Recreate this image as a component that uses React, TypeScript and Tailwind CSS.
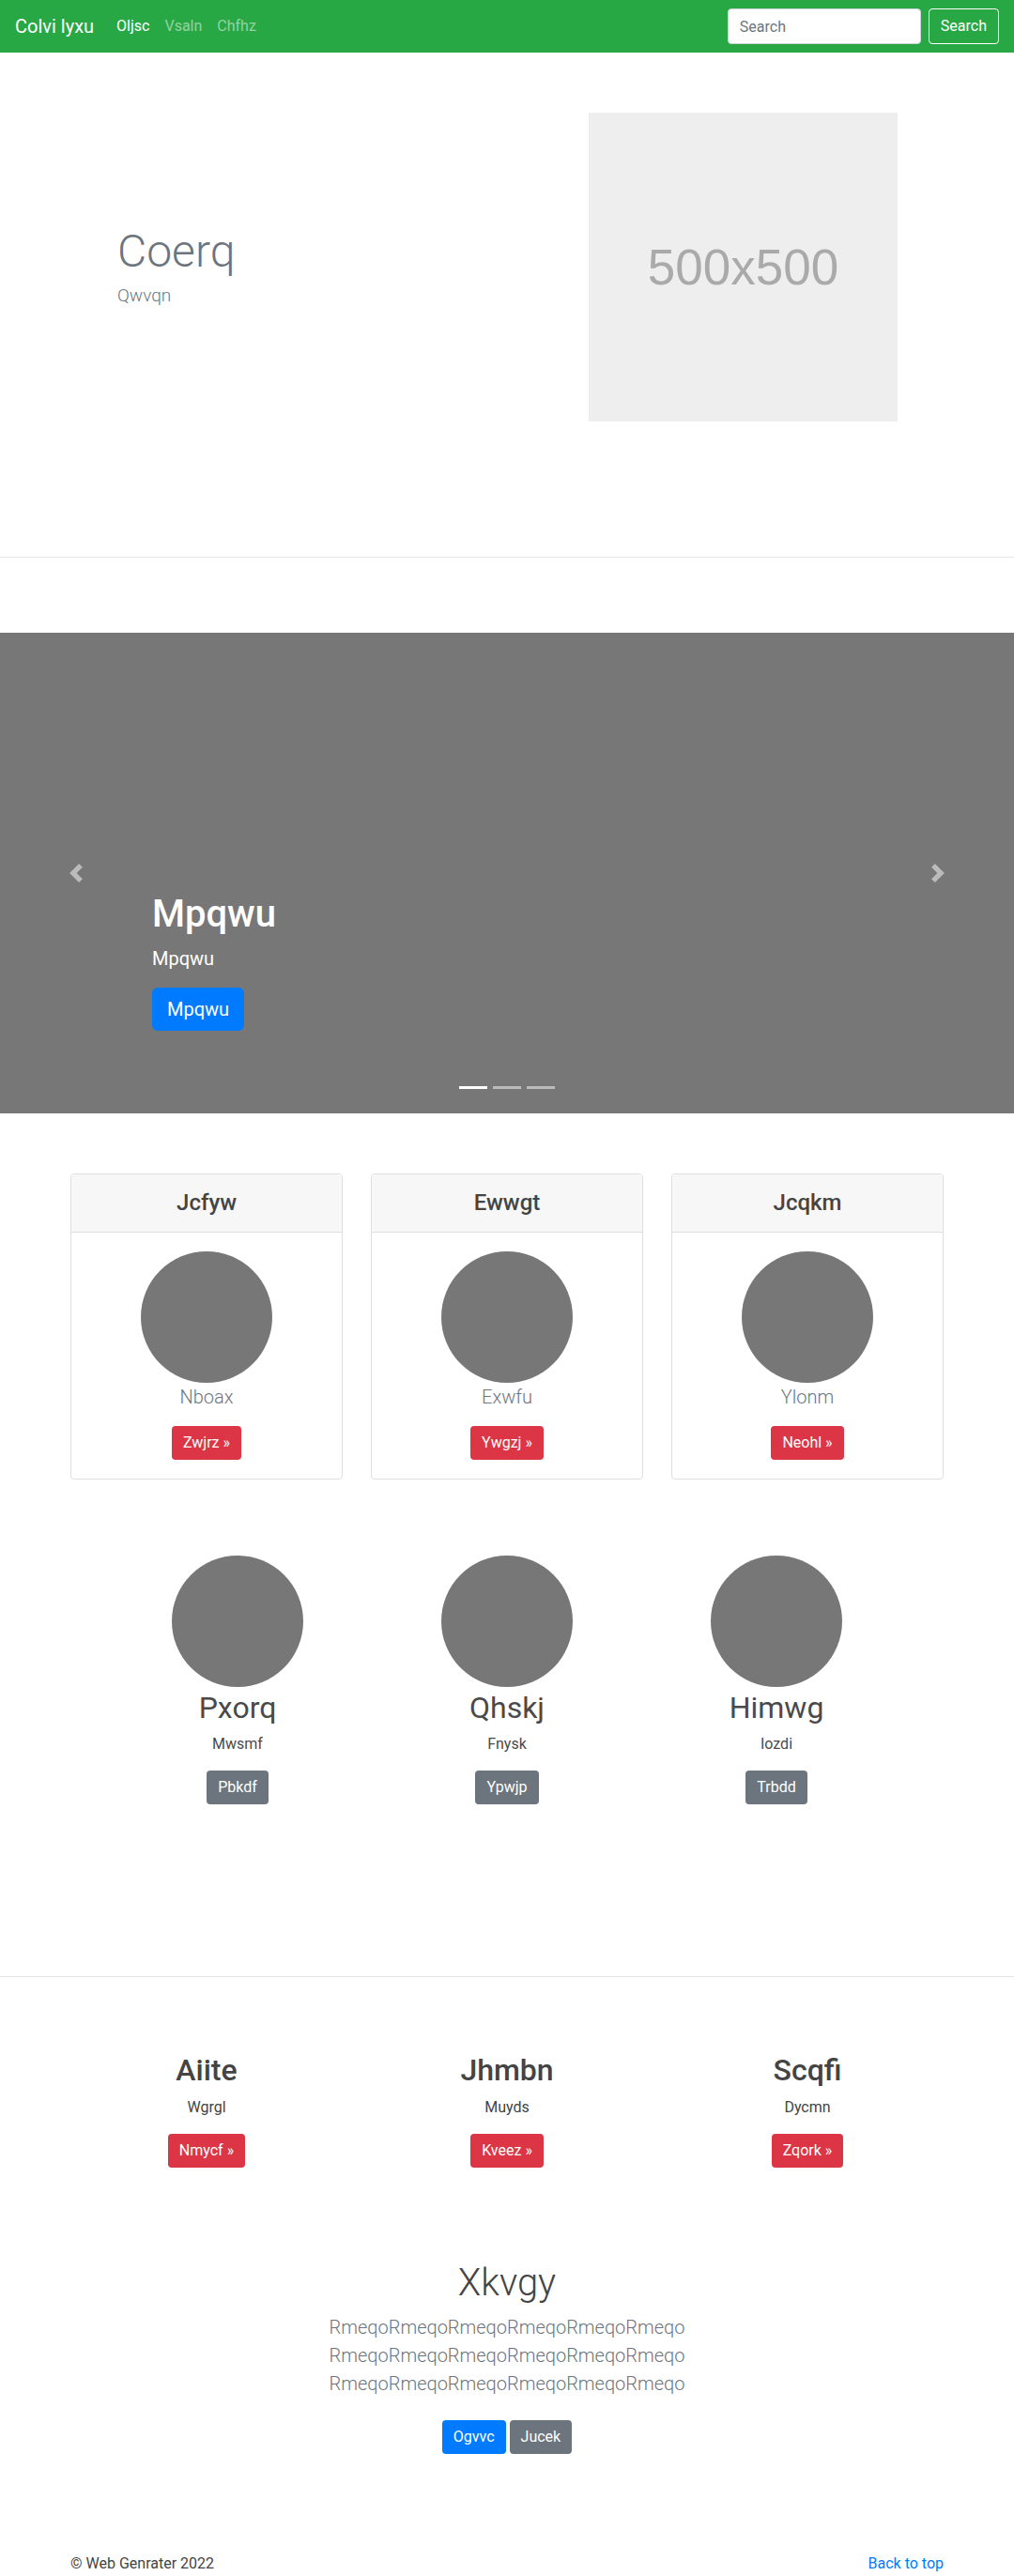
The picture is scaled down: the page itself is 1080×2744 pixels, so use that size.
import React from "react";

const featureCards = [
  { title: "Jcfyw", name: "Nboax", action: "Zwjrz" },
  { title: "Ewwgt", name: "Exwfu", action: "Ywgzj" },
  { title: "Jcqkm", name: "Ylonm", action: "Neohl" },
];

const people = [
  { title: "Pxorq", text: "Mwsmf", action: "Pbkdf" },
  { title: "Qhskj", text: "Fnysk", action: "Ypwjp" },
  { title: "Himwg", text: "Iozdi", action: "Trbdd" },
];

const columns = [
  { title: "Aiite", text: "Wgrgl", action: "Nmycf" },
  { title: "Jhmbn", text: "Muyds", action: "Kveez" },
  { title: "Scqfi", text: "Dycmn", action: "Zqork" },
];

function Navbar() {
  return (
    <nav className="flex h-14 items-center bg-[#28a745] px-4">
      <a href="#" className="mr-4 text-xl leading-[30px] text-white">
        Colvi lyxu
      </a>
      <ul className="flex items-center">
        <li>
          <a href="#" className="block px-2 py-2 text-white">
            Oljsc
          </a>
        </li>
        <li>
          <a href="#" className="block px-2 py-2 text-white/50">
            Vsaln
          </a>
        </li>
        <li>
          <a href="#" className="block px-2 py-2 text-white/50">
            Chfhz
          </a>
        </li>
      </ul>
      <form className="ml-auto flex items-center" onSubmit={(e) => e.preventDefault()}>
        <input
          type="text"
          placeholder="Search"
          className="mr-2 h-[38px] w-[206px] rounded border border-[#ced4da] bg-white px-3 text-base text-[#495057] placeholder:text-[#6c757d] outline-none"
        />
        <button
          type="submit"
          className="h-[38px] rounded border border-white px-3 text-base text-white"
        >
          Search
        </button>
      </form>
    </nav>
  );
}

function Hero() {
  return (
    <section className="pt-16 pb-[144px]">
      <div className="mx-auto flex w-[960px] items-center">
        <div className="w-[480px] pl-[65px]">
          <h1 className="text-[48px] font-light leading-[1.2] text-[#6c757d]">Coerq</h1>
          <p className="mt-1 text-[19px] font-light leading-[1.5] text-[#6c757d]">Qwvqn</p>
        </div>
        <div className="ml-[87px] flex h-[329px] w-[329px] items-center justify-center bg-[#eeeeee]">
          <span className="font-['Liberation_Sans',Arial,sans-serif] text-[53px] text-[#aaaaaa]">
            500x500
          </span>
        </div>
      </div>
    </section>
  );
}

function Carousel() {
  return (
    <div className="relative mt-20 flex h-[512px] flex-col justify-end bg-[#777777] pb-[88px] pl-[15%]">
      <h1 className="text-[40px] font-medium leading-[1.2] text-white">Mpqwu</h1>
      <p className="mt-2 text-xl leading-[1.5] text-white">Mpqwu</p>
      <div className="mt-4">
        <a
          href="#"
          className="inline-block rounded-md bg-[#007bff] px-4 py-2 text-xl leading-[1.5] text-white"
        >
          Mpqwu
        </a>
      </div>

      {/* controls */}
      <button className="absolute left-0 top-0 flex h-full w-[15%] items-center justify-center opacity-50">
        <svg width="20" height="20" viewBox="0 0 8 8" fill="#fff">
          <path d="M5.25 0l-4 4 4 4 1.5-1.5L4.25 4l2.5-2.5L5.25 0z" />
        </svg>
      </button>
      <button className="absolute right-0 top-0 flex h-full w-[15%] items-center justify-center opacity-50">
        <svg width="20" height="20" viewBox="0 0 8 8" fill="#fff">
          <path d="M2.75 0l-1.5 1.5L3.75 4l-2.5 2.5L2.75 8l4-4-4-4z" />
        </svg>
      </button>

      {/* indicators */}
      <ol className="absolute bottom-[26px] left-0 right-0 flex justify-center">
        <li className="mx-[3px] h-[3px] w-[30px] bg-white" />
        <li className="mx-[3px] h-[3px] w-[30px] bg-white/50" />
        <li className="mx-[3px] h-[3px] w-[30px] bg-white/50" />
      </ol>
    </div>
  );
}

function Circle() {
  return <div className="mx-auto h-[140px] w-[140px] rounded-full bg-[#777777]" />;
}

function FeatureCards() {
  return (
    <div className="mx-auto mt-16 grid w-[960px] grid-cols-3">
      {featureCards.map((card) => (
        <div key={card.title} className="px-[15px]">
          <div className="overflow-hidden rounded border border-[#dfdfdf] text-center">
            <div className="flex h-[62px] items-center justify-center border-b border-[#dfdfdf] bg-[#f7f7f7]">
              <h4 className="text-2xl font-medium leading-[1.2] text-[#444]">{card.title}</h4>
            </div>
            <div className="p-5">
              <Circle />
              <p className="text-xl font-light leading-[1.5] text-[#6c757d]">{card.name}</p>
              <a
                href="#"
                className="mt-4 inline-block rounded bg-[#dc3545] px-3 py-[6px] text-base leading-[1.5] text-white"
              >
                {card.action} &raquo;
              </a>
            </div>
          </div>
        </div>
      ))}
    </div>
  );
}

function People() {
  return (
    <div className="mx-auto mt-[81px] grid w-[861px] grid-cols-3 text-center">
      {people.map((p) => (
        <div key={p.title}>
          <Circle />
          <h2 className="mt-[3px] text-[32px] leading-[1.2] text-[#4a4a4a]">{p.title}</h2>
          <p className="mt-2 text-base leading-[1.5] text-[#4a4a4a]">{p.text}</p>
          <a
            href="#"
            className="mt-4 inline-block rounded bg-[#6c757d] px-3 py-[6px] text-base leading-[1.5] text-white"
          >
            {p.action}
          </a>
        </div>
      ))}
    </div>
  );
}

function Columns() {
  return (
    <div className="mx-auto mt-20 grid w-[960px] grid-cols-3 text-center">
      {columns.map((c) => (
        <div key={c.title}>
          <h2 className="text-[32px] font-medium leading-[1.2] text-[#444]">{c.title}</h2>
          <p className="mt-2 text-base leading-[1.5] text-[#444]">{c.text}</p>
          <a
            href="#"
            className="mt-4 inline-block rounded bg-[#dc3545] px-3 py-[6px] text-base leading-[1.5] text-white"
          >
            {c.action} &raquo;
          </a>
        </div>
      ))}
    </div>
  );
}

function CallToAction() {
  const line = "Rmeqo".repeat(6);
  return (
    <section className="mt-[99px] text-center">
      <h1 className="text-[40px] font-light leading-[1.2] text-[#444]">Xkvgy</h1>
      <p className="mt-2 text-xl font-light leading-[1.5] text-[#6c757d]">
        <span className="block">{line}</span>
        <span className="block">{line}</span>
        <span className="block">{line}</span>
      </p>
      <p className="mt-6 flex justify-center gap-1">
        <a href="#" className="rounded bg-[#007bff] px-3 py-[6px] text-base leading-[1.5] text-white">
          Ogvvc
        </a>
        <a href="#" className="rounded bg-[#6c757d] px-3 py-[6px] text-base leading-[1.5] text-white">
          Jucek
        </a>
      </p>
    </section>
  );
}

function Footer() {
  return (
    <footer className="mx-auto mt-[105px] flex w-[960px] justify-between px-[15px] pb-12 text-base leading-[1.5]">
      <p className="text-[#444]">&copy; Web Genrater 2022</p>
      <a href="#" className="text-[#007bff]">
        Back to top
      </a>
    </footer>
  );
}

export default function App() {
  return (
    <div className="min-h-screen bg-white font-[Roboto,sans-serif] text-[#212529]">
      <Navbar />
      <Hero />
      <div className="h-px bg-[#e6e6e6]" />
      <Carousel />
      <FeatureCards />
      <People />
      <div className="mt-[183px] h-px bg-[#e6e6e6]" />
      <Columns />
      <CallToAction />
      <Footer />
    </div>
  );
}
